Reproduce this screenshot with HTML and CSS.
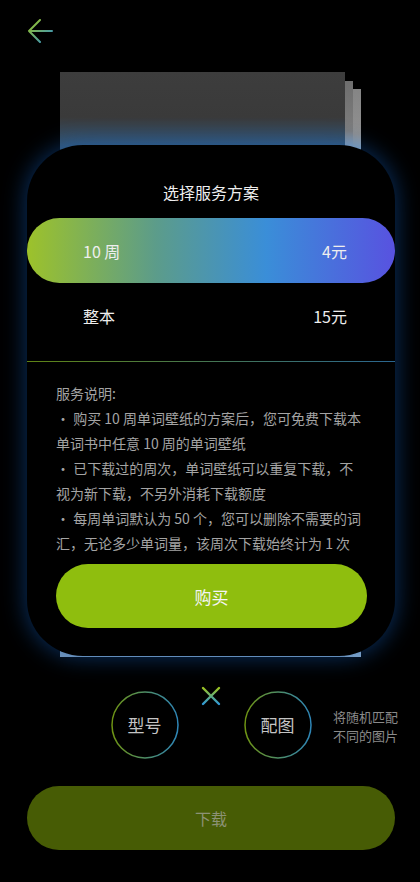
FILE: index.html
```html
<!DOCTYPE html>
<html lang="zh-CN">
<head>
    <meta charset="UTF-8">
    <meta name="viewport" content="width=device-width, initial-scale=1.0">
    <title>选择服务方案</title>
    <link rel="stylesheet" href="styles.css">
</head>
<body>

<div class="page">
    <!-- 返回 -->
    <div class="topbar">
        <svg class="back" width="26" height="24" viewBox="0 0 26 24">
            <defs>
                <linearGradient id="backGrad" x1="0" y1="0" x2="1" y2="1">
                    <stop offset="0" stop-color="#9cc320"/>
                    <stop offset="1" stop-color="#2f8fd0"/>
                </linearGradient>
            </defs>
            <path d="M13 1 L2 12 L13 23 M2 12 H25" fill="none" stroke="url(#backGrad)" stroke-width="2" stroke-linecap="round" stroke-linejoin="round"/>
        </svg>
    </div>

    <div class="stage">
        <!-- 背后的壁纸预览 -->
        <div class="stack">
            <div class="sheet sheet-3"></div>
            <div class="sheet sheet-2"></div>
            <div class="sheet sheet-1"></div>
        </div>

        <!-- 弹窗 -->
        <div class="modal">
            <h2 class="modal-title">选择服务方案</h2>

            <div class="plan active">
                <span>10 周</span>
                <span>4元</span>
            </div>
            <div class="plan">
                <span>整本</span>
                <span>15元</span>
            </div>

            <div class="divider"></div>

            <div class="notes">
                <p>服务说明:</p>
                <p>・ 购买 10 周单词壁纸的方案后，您可免费下载本单词书中任意 10 周的单词壁纸</p>
                <p>・ 已下载过的周次，单词壁纸可以重复下载，不视为新下载，不另外消耗下载额度</p>
                <p>・ 每周单词默认为 50 个，您可以删除不需要的词汇，无论多少单词量，该周次下载始终计为 1 次</p>
            </div>

            <button class="buy-btn">购买</button>
        </div>
    </div>

    <!-- 型号 x 配图 -->
    <div class="combo">
        <div class="ring">
            <svg width="68" height="68" viewBox="0 0 68 68">
                <defs>
                    <linearGradient id="ringGrad" x1="0" y1="0" x2="1" y2="0">
                        <stop offset="0" stop-color="#6f9412"/>
                        <stop offset="1" stop-color="#2e86b8"/>
                    </linearGradient>
                </defs>
                <circle cx="34" cy="34" r="33" fill="none" stroke="url(#ringGrad)" stroke-width="1.5"/>
            </svg>
            <span>型号</span>
        </div>
        <div class="times">
            <svg width="20" height="20" viewBox="0 0 20 20">
                <defs>
                    <linearGradient id="timesGrad" x1="0" y1="0" x2="0" y2="1">
                        <stop offset="0" stop-color="#9cc320"/>
                        <stop offset="1" stop-color="#2f9ad8"/>
                    </linearGradient>
                </defs>
                <path d="M2 2 L18 18 M18 2 L2 18" stroke="url(#timesGrad)" stroke-width="2.4" stroke-linecap="round"/>
            </svg>
        </div>
        <div class="ring">
            <svg width="68" height="68" viewBox="0 0 68 68">
                <circle cx="34" cy="34" r="33" fill="none" stroke="url(#ringGrad)" stroke-width="1.5"/>
            </svg>
            <span>配图</span>
        </div>
        <p class="hint">将随机匹配<br>不同的图片</p>
    </div>

    <button class="download-btn">下载</button>
</div>

</body>
</html>
```

FILE: styles.css
```css
body {
    margin: 0;
    padding: 0;
    background: #000;
    font-family: "Noto Sans CJK SC", "Noto Sans", sans-serif;
    color: #eee;
}
.page {
    width: 420px;
    height: 882px;
    overflow: hidden;
}
.topbar {
    height: 72px;
    padding: 19px 0 0 27px;
    box-sizing: border-box;
}
.back {
    display: block;
}
.stage {
    position: relative;
    width: 368px;
    margin-left: 27px;
    padding-top: 73px;
}
.stack {
    position: absolute;
    top: 0;
    left: 0;
    right: 0;
    bottom: -1px;
}
.sheet {
    position: absolute;
    bottom: 0;
}
.sheet-1 {
    left: 33px;
    width: 285px;
    top: 0;
    background: linear-gradient(#3d3d3d 0, #3a3a3a 45px, #34536f 73px, #4d6f90 300px, #7d9bb8 100%);
}
.sheet-2 {
    left: 41px;
    width: 285px;
    top: 9px;
    background: linear-gradient(#6e6e6e 0, #7d7d7d 50px, #8aa0b5 64px, #8aa6c0 100%);
}
.sheet-3 {
    left: 49px;
    width: 285px;
    top: 17px;
    background: linear-gradient(#858585 0, #909090 45px, #8ea6bb 60px, #8eaac4 100%);
}
.modal {
    position: relative;
    background: #000;
    border-radius: 56px;
    box-shadow: 0 0 22px 2px rgba(20, 100, 200, 0.45);
    padding: 36px 0 28px;
}
.modal-title {
    margin: 0 0 15px;
    font-size: 16px;
    font-weight: 400;
    line-height: 22px;
    text-align: center;
    color: #eee;
}
.plan {
    height: 65px;
    display: flex;
    justify-content: space-between;
    align-items: center;
    padding: 0 48px 0 56px;
    font-size: 16px;
    color: #eee;
}
.plan.active {
    border-radius: 33px;
    background: linear-gradient(90deg, #9dc22a 0%, #5c9c8a 35%, #3a8ed8 65%, #5852e0 100%);
}
.divider {
    height: 1px;
    margin-top: 13px;
    background: linear-gradient(90deg, #5f8414, #2a6690);
}
.notes {
    padding: 19px 33px 0 29px;
    font-size: 14px;
    line-height: 25px;
    color: #a4a4a4;
}
.notes p {
    margin: 0;
}
.buy-btn {
    display: block;
    width: 311px;
    height: 64px;
    margin: 8px 0 0 29px;
    border: none;
    border-radius: 32px;
    background: #8fbe0e;
    color: #f4f4f4;
    font-family: inherit;
    font-size: 17px;
}
.combo {
    display: flex;
    align-items: flex-start;
    margin-top: 35px;
    padding-left: 111px;
}
.ring {
    position: relative;
    width: 67px;
    height: 67px;
    display: flex;
    justify-content: center;
    align-items: center;
}
.ring svg {
    position: absolute;
    top: 0;
    left: 0;
}
.ring span {
    font-size: 17px;
    color: #c4c4c4;
}
.times {
    width: 66px;
    display: flex;
    justify-content: center;
    margin-top: -5px;
}
.hint {
    margin: 16px 0 0 22px;
    font-size: 13px;
    line-height: 19px;
    color: #8a8a8a;
}
.download-btn {
    display: block;
    width: 368px;
    height: 64px;
    margin: 28px 0 0 27px;
    border: none;
    border-radius: 32px;
    background: #475c05;
    color: #8c9275;
    font-family: inherit;
    font-size: 16px;
}
```
